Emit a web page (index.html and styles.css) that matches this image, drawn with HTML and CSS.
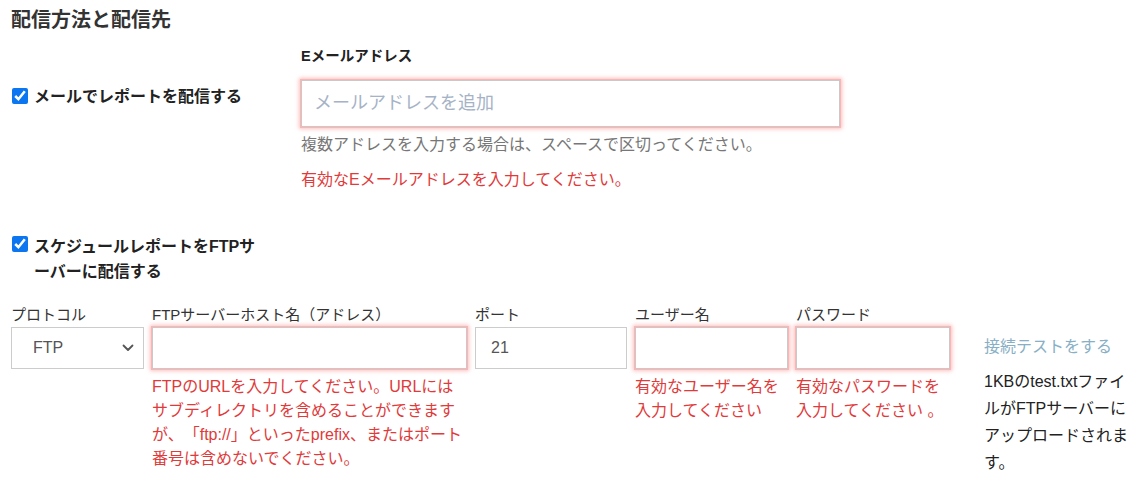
FILE: index.html
```html
<!DOCTYPE html>
<html lang="ja">
<head>
<meta charset="utf-8">
<title>配信方法と配信先</title>
<link rel="stylesheet" href="styles.css">
</head>
<body>
<div class="page">
  <h2 class="title">配信方法と配信先</h2>

  <div class="email-row">
    <div class="left-col">
      <label class="check-label">
        <input type="checkbox" class="check" checked>
        <span class="check-text">メールでレポートを配信する</span>
      </label>
    </div>
    <div class="email-col">
      <div class="field-title">Eメールアドレス</div>
      <input type="text" class="text-input invalid email-input" placeholder="メールアドレスを追加">
      <div class="help">複数アドレスを入力する場合は、スペースで区切ってください。</div>
      <div class="error email-error">有効なEメールアドレスを入力してください。</div>
    </div>
  </div>

  <div class="ftp-check">
    <label class="check-label">
      <input type="checkbox" class="check" checked>
      <span class="check-text">スケジュールレポートをFTPサーバーに配信する</span>
    </label>
  </div>

  <div class="ftp-row">
    <div class="field f-proto">
      <div class="flabel">プロトコル</div>
      <div class="select-box">
        <span class="select-value">FTP</span>
        <svg class="chevron" width="12" height="8" viewBox="0 0 12 8"><path d="M1.5 1.5 L6 6 L10.5 1.5" fill="none" stroke="#555" stroke-width="1.8" stroke-linecap="round" stroke-linejoin="round"/></svg>
      </div>
    </div>
    <div class="field f-host">
      <div class="flabel">FTPサーバーホスト名（アドレス）</div>
      <input type="text" class="text-input invalid box-input">
      <div class="error ferror">FTPのURLを入力してください。URLにはサブディレクトリを含めることができますが、「ftp://」といったprefix、またはポート番号は含めないでください。</div>
    </div>
    <div class="field f-port">
      <div class="flabel">ポート</div>
      <input type="text" class="text-input box-input port-input" value="21">
    </div>
    <div class="field f-user">
      <div class="flabel">ユーザー名</div>
      <input type="text" class="text-input invalid box-input">
      <div class="error ferror">有効なユーザー名を入力してください</div>
    </div>
    <div class="field f-pass">
      <div class="flabel">パスワード</div>
      <input type="password" class="text-input invalid box-input">
      <div class="error ferror">有効なパスワードを入力してください 。</div>
    </div>
    <div class="test-col">
      <a class="test-link" href="#">接続テストをする</a>
      <p class="test-note">1KBのtest.txtファイルがFTPサーバーにアップロードされます。</p>
    </div>
  </div>
</div>
</body>
</html>
```

FILE: styles.css
```css
* { box-sizing: border-box; }

html, body {
  margin: 0;
  padding: 0;
  background: #ffffff;
}

body {
  font-family: "Liberation Sans", "Noto Sans CJK JP", sans-serif;
  color: #333333;
  text-spacing-trim: space-all;
}

.page {
  padding: 6px 0 0 11px;
}

.title {
  margin: 0;
  font-size: 20px;
  line-height: 28px;
  font-weight: 700;
  color: #333333;
}

.email-row {
  display: flex;
  margin-top: 12px;
}

.left-col {
  width: 252px;
  padding-top: 39px;
  flex: none;
}

.check-label {
  display: flex;
  align-items: flex-start;
  font-size: 16px;
  font-weight: 700;
  color: #222222;
  line-height: 24px;
}

.check {
  width: 16px;
  height: 16px;
  margin: 3px 6px 0 1px;
  flex: none;
  accent-color: #0b76ef;
}

.check-text {
  display: block;
}

.email-col {
  margin-left: 38px;
  width: 539px;
}

.field-title {
  font-size: 14.5px;
  line-height: 20px;
  font-weight: 700;
  color: #222222;
  margin-bottom: 14px;
}

.text-input {
  display: block;
  font-family: "Liberation Sans", "Noto Sans CJK JP", sans-serif;
  border: 1px solid #cccccc;
  background: #ffffff;
  outline: none;
  border-radius: 0;
  color: #555555;
  margin: 0;
}

.text-input.invalid {
  border-color: #c9c9c9;
  box-shadow: 0 0 0 1px #ffb3b3, 0 0 4px 2px rgba(255, 110, 110, 0.45);
}

.email-input {
  width: 539px;
  height: 47px;
  padding: 0 12px;
  font-size: 18px;
}

.email-input::placeholder {
  color: #a6b3c6;
}

.help {
  margin-top: 6px;
  font-size: 16px;
  line-height: 24px;
  color: #777777;
}

.error {
  color: #e03a3a;
  font-size: 16px;
  line-height: 24px;
}

.email-error {
  margin-top: 11px;
}

.ftp-check {
  margin-top: 42px;
  width: 262px;
}

.ftp-check .check-label {
  line-height: 25px;
}

.ftp-check .check {
  margin-top: 2px;
}

.ftp-check .check-text {
  width: 230px;
}

.ftp-row {
  display: flex;
  align-items: flex-start;
  margin-top: 21px;
}

.field {
  flex: none;
  margin-right: 8px;
}

.flabel {
  font-size: 15px;
  line-height: 20px;
  color: #333333;
  margin-bottom: 2px;
  white-space: nowrap;
}

.f-proto { width: 133px; }
.f-host { width: 315px; }
.f-port { width: 152px; }
.f-user { width: 153px; }
.f-pass { width: 154px; margin-right: 34px; }

.select-box {
  display: flex;
  align-items: center;
  justify-content: space-between;
  height: 42px;
  border: 1px solid #cccccc;
  padding: 0 9px 0 21px;
  font-size: 16px;
  color: #555555;
  background: #ffffff;
}

.chevron {
  display: block;
}

.box-input {
  width: 100%;
  height: 42px;
  font-size: 16px;
  padding: 0 15px;
}

.ferror {
  margin-top: 6px;
}

.test-col {
  width: 150px;
  flex: none;
  padding-top: 30px;
}

.test-link {
  display: block;
  font-size: 16px;
  line-height: 24px;
  color: #88afc5;
  text-decoration: none;
}

.test-note {
  margin: 9px 0 0 0;
  font-size: 16px;
  line-height: 27px;
  color: #222222;
}
```
